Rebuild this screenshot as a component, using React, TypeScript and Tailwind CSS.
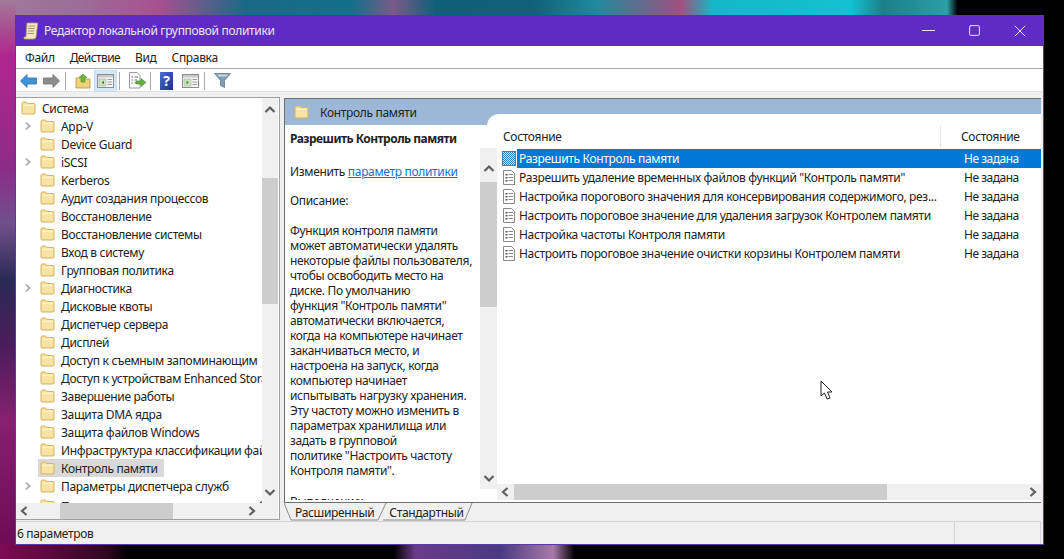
import React from "react";
import { X, Square, Minus } from "lucide-react";

const Folder = ({ className = "" }: { className?: string }) => (
  <svg width="15" height="14" viewBox="0 0 15 14" className={"shrink-0 " + className}>
    <path d="M1 2.5 Q1 1 2.5 1 H5.5 L7 2.5 H13 Q14 2.5 14 3.5 V12 Q14 13 13 13 H2 Q1 13 1 12 Z" fill="#f6dd8e" stroke="#d3b56a" strokeWidth="1" />
    <rect x="2" y="3.5" width="11" height="2" fill="#fdf3c8" />
    <rect x="2" y="5.5" width="11" height="6.5" fill="#f8e4a2" />
  </svg>
);

const Chev = ({ dir, className = "" }: { dir: "up" | "down" | "left" | "right"; className?: string }) => {
  const d = {
    up: "M1.5 7 L6 2.5 L10.5 7",
    down: "M1.5 3 L6 7.5 L10.5 3",
    left: "M7.5 1 L3 5 L7.5 9",
    right: "M3.5 1 L8 5 L3.5 9",
  }[dir];
  return (
    <svg width="12" height="10" viewBox="0 0 12 10" className={className}>
      <path d={d} fill="none" stroke="#5f5f5f" strokeWidth="2.2" />
    </svg>
  );
};

const PolicyIcon = ({ on }: { on?: boolean }) => (
  <svg width="14" height="15" viewBox="0 0 14 15" className="shrink-0">
    {on ? (
      <>
        <defs>
          <pattern id="dith" width="2" height="2" patternUnits="userSpaceOnUse">
            <rect width="2" height="2" fill="#2d7fc0" />
            <rect width="1" height="1" fill="#cfe3f3" />
            <rect x="1" y="1" width="1" height="1" fill="#cfe3f3" />
          </pattern>
        </defs>
        <rect x="0.5" y="0.5" width="13" height="14" fill="url(#dith)" stroke="#3b7fb5" />
      </>
    ) : (
      <>
        <path d="M1.5 0.5 H9.5 L12.5 3.5 V14.5 H1.5 Z" fill="#fff" stroke="#8a8a8a" />
        <rect x="3.5" y="4" width="2" height="1.5" fill="#555" />
        <rect x="6.5" y="4" width="4.5" height="1" fill="#8a8a8a" />
        <rect x="3.5" y="7" width="2" height="1.5" fill="#555" />
        <rect x="6.5" y="7" width="4.5" height="1" fill="#8a8a8a" />
        <rect x="3.5" y="10" width="2" height="1.5" fill="#555" />
        <rect x="6.5" y="10" width="4.5" height="1" fill="#8a8a8a" />
      </>
    )}
  </svg>
);

const Sep = () => <div className="w-px h-[18px] bg-[#a8a8a8] shrink-0" />;

const tree: { t: string; a?: boolean; sel?: boolean; last?: boolean }[] = [
  { t: "App-V", a: true },
  { t: "Device Guard" },
  { t: "iSCSI", a: true },
  { t: "Kerberos" },
  { t: "Аудит создания процессов" },
  { t: "Восстановление" },
  { t: "Восстановление системы" },
  { t: "Вход в систему" },
  { t: "Групповая политика" },
  { t: "Диагностика", a: true },
  { t: "Дисковые квоты" },
  { t: "Диспетчер сервера" },
  { t: "Дисплей" },
  { t: "Доступ к съемным запоминающим" },
  { t: "Доступ к устройствам Enhanced Storage" },
  { t: "Завершение работы" },
  { t: "Защита DMA ядра" },
  { t: "Защита файлов Windows" },
  { t: "Инфраструктура классификации файлов" },
  { t: "Контроль памяти", sel: true },
  { t: "Параметры диспетчера служб", a: true },
  { t: "Параметры пользовательских служб", last: true },
];

const rows = [
  "Разрешить Контроль памяти",
  "Разрешить удаление временных файлов функций \"Контроль памяти\"",
  "Настройка порогового значения для консервирования содержимого, рез...",
  "Настроить пороговое значение для удаления загрузок Контролем памяти",
  "Настройка частоты Контроля памяти",
  "Настроить пороговое значение очистки корзины Контролем памяти",
];

const desc = [
  "Функция контроля памяти",
  "может автоматически удалять",
  "некоторые файлы пользователя,",
  "чтобы освободить место на",
  "диске. По умолчанию",
  "функция \"Контроль памяти\"",
  "автоматически включается,",
  "когда на компьютере начинает",
  "заканчиваться место, и",
  "настроена на запуск, когда",
  "компьютер начинает",
  "испытывать нагрузку хранения.",
  "Эту частоту можно изменить в",
  "параметрах хранилища или",
  "задать в групповой",
  "политике \"Настроить частоту",
  "Контроля памяти\".",
];

export default function App() {
  return (
    <div className="relative w-[1064px] h-[559px] overflow-hidden bg-black pt-[15px] pl-[15px] font-['Noto_Sans',sans-serif] text-[12px] leading-[15px] tracking-[-0.33px] text-[#222]">
      <svg className="absolute inset-0" width="1064" height="559">
        <defs>
          <linearGradient id="top" x1="0" x2="1" y1="0" y2="0">
            <stop offset="0" stopColor="#a07a98" />
            <stop offset="0.07" stopColor="#9a6f96" />
            <stop offset="0.15" stopColor="#a8508f" />
            <stop offset="0.23" stopColor="#1a6a86" />
            <stop offset="0.33" stopColor="#12708a" />
            <stop offset="0.37" stopColor="#7a5a88" />
            <stop offset="0.41" stopColor="#0e5f78" />
            <stop offset="0.5" stopColor="#0f6078" />
            <stop offset="0.56" stopColor="#1f8a9c" />
            <stop offset="0.64" stopColor="#a0507e" />
            <stop offset="0.67" stopColor="#14b8c8" />
            <stop offset="0.8" stopColor="#12c2d0" />
            <stop offset="0.83" stopColor="#1a7f88" />
            <stop offset="0.89" stopColor="#2aa0a8" />
            <stop offset="0.9" stopColor="#000" />
            <stop offset="1" stopColor="#000" />
          </linearGradient>
          <linearGradient id="left" x1="0" x2="0" y1="0" y2="1">
            <stop offset="0" stopColor="#a07a98" />
            <stop offset="0.1" stopColor="#b0258f" />
            <stop offset="0.3" stopColor="#8c2c86" />
            <stop offset="0.4" stopColor="#70508c" />
            <stop offset="0.5" stopColor="#2a2a55" />
            <stop offset="0.62" stopColor="#4c1c5c" />
            <stop offset="0.75" stopColor="#862070" />
            <stop offset="1" stopColor="#6a0a50" />
          </linearGradient>
          <linearGradient id="bot" x1="0" x2="1" y1="0" y2="0">
            <stop offset="0" stopColor="#800a55" />
            <stop offset="0.1" stopColor="#300820" />
            <stop offset="0.12" stopColor="#000" />
            <stop offset="0.37" stopColor="#000" />
            <stop offset="0.39" stopColor="#6a3a88" />
            <stop offset="0.47" stopColor="#4a3a80" />
            <stop offset="0.52" stopColor="#a77aa8" />
            <stop offset="0.54" stopColor="#000" />
            <stop offset="1" stopColor="#000" />
          </linearGradient>
        </defs>
        <rect x="0" y="0" width="1064" height="16" fill="url(#top)" />
        <rect x="0" y="0" width="16" height="559" fill="url(#left)" />
        <rect x="0" y="544" width="1064" height="15" fill="url(#bot)" />
      </svg>

      <div className="relative w-[1029px] h-[530px] bg-[#f0f0f0] flex flex-col border-x border-b border-[#5a3aa8]">
        {/* title bar */}
        <div className="h-[31px] -mx-px bg-[#5f2bc4] flex items-center text-white shrink-0">
          <svg width="16" height="18" viewBox="0 0 16 18" className="ml-[8px]">
            <path d="M4 1 H14 Q15.5 1 14.5 3 L13 15 Q12.5 17 11 17 H2 Q0.5 17 1 15 H3 Z" fill="#f3e6bf" stroke="#b9a26a" strokeWidth="0.8" />
            <path d="M5.5 4 H12 M5 6.5 H11.5 M5 9 H11 M4.5 11.5 H11" stroke="#a08a58" strokeWidth="0.9" />
          </svg>
          <span className="ml-[5px] text-[#ece6f8]">Редактор локальной групповой политики</span>
          <div className="ml-auto mr-px flex text-[#e9e2f8]">
            <div className="w-[46px] h-[30px] flex items-center justify-center"><Minus size={21} strokeWidth={1} absoluteStrokeWidth /></div>
            <div className="w-[46px] h-[30px] flex items-center justify-center"><Square size={13} strokeWidth={1} absoluteStrokeWidth /></div>
            <div className="w-[46px] h-[30px] flex items-center justify-center"><X size={20} strokeWidth={1} absoluteStrokeWidth /></div>
          </div>
        </div>

        {/* menu */}
        <div className="h-[22px] bg-white flex items-center gap-[15px] pl-[9px] shrink-0 border-b border-[#a9a9a9] box-content">
          <span>Файл</span>
          <span className="tracking-[-0.6px]">Действие</span>
          <span>Вид</span>
          <span>Справка</span>
        </div>

        {/* toolbar */}
        <div className="h-[23px] bg-white flex items-center pl-[4px] pt-px shrink-0 border-b border-[#e2e2e2]">
          <svg width="17" height="14" viewBox="0 0 17 14">
            <path d="M0.5 7 L7 0.5 V4 H16.5 V10 H7 V13.5 Z" fill="#3f93dc" stroke="#2a6fb0" strokeWidth="0.8" />
          </svg>
          <svg width="17" height="14" viewBox="0 0 17 14" className="ml-[6px]">
            <path d="M16.5 7 L10 0.5 V4 H0.5 V10 H10 V13.5 Z" fill="#8d8d8d" stroke="#6e6e6e" strokeWidth="0.8" />
          </svg>
          <div className="ml-[5px]"><Sep /></div>
          <svg width="16" height="16" viewBox="0 0 16 16" className="ml-[9px]">
            <path d="M1 5 H6 L7 6 H15 V15 H1 Z" fill="#f0d078" stroke="#b59648" strokeWidth="0.8" />
            <path d="M8 1 L12 4.5 H10 V9 H6 V4.5 H4 Z" fill="#6fb53a" stroke="#4a8a26" strokeWidth="0.6" />
          </svg>
          <div className="ml-[3px] w-[23px] h-[22px] bg-[#d4e8f8] border border-[#c2ddf3] flex items-center justify-center">
            <svg width="17" height="14" viewBox="0 0 17 14">
              <rect x="0.5" y="0.5" width="16" height="13" fill="#f6f6f6" stroke="#8d8d8d" />
              <rect x="1" y="1" width="15" height="2.5" fill="#c9c9c9" />
              <rect x="2" y="5" width="7" height="7" fill="#cfe6c0" stroke="#9c9c9c" strokeWidth="0.5" />
              <path d="M7 6.5 L4.5 8.5 L7 10.5 Z" fill="#3f9a3f" />
              <path d="M10.5 5.5 H15 M10.5 8 H15 M10.5 10.5 H15" stroke="#9a9a9a" />
            </svg>
          </div>
          <div className="ml-[2px]"><Sep /></div>
          <svg width="19" height="17" viewBox="0 0 19 17" className="ml-[8px]">
            <path d="M1.5 0.5 H9 L12 3.5 V16 H1.5 Z" fill="#fff" stroke="#9a9a9a" />
            <path d="M3.5 5 H5 M6.5 5 H10 M3.5 8 H5 M6.5 8 H9 M3.5 11 H5 M6.5 11 H8" stroke="#707070" />
            <path d="M18 10.5 L13 6.5 V9 H8 V12 H13 V14.5 Z" fill="#62b33a" stroke="#44882a" strokeWidth="0.6" />
          </svg>
          <div className="ml-[3px]"><Sep /></div>
          <div className="ml-[9px] w-[13px] h-[18px] bg-gradient-to-br from-[#4d6fd0] to-[#1d2f8a] text-white font-bold text-[14px] leading-[18px] text-center">?</div>
          <svg width="17" height="14" viewBox="0 0 17 14" className="ml-[9px]">
            <rect x="0.5" y="0.5" width="16" height="13" fill="#f6f6f6" stroke="#8d8d8d" />
            <rect x="1" y="1" width="15" height="2.5" fill="#c9c9c9" />
            <rect x="2" y="5" width="7" height="7" fill="#cfe6c0" stroke="#9c9c9c" strokeWidth="0.5" />
            <path d="M4.5 6.5 L7 8.5 L4.5 10.5 Z" fill="#3f9a3f" />
            <path d="M10.5 5.5 H15 M10.5 8 H15 M10.5 10.5 H15" stroke="#9a9a9a" />
          </svg>
          <div className="ml-[5px]"><Sep /></div>
          <svg width="17" height="17" viewBox="0 0 17 17" className="ml-[9px]">
            <path d="M0.5 1.5 H16.5 L10.5 8.5 V15.5 L6.5 13.5 V8.5 Z" fill="#7f9fb4" stroke="#5f7a8c" strokeWidth="0.8" />
            <path d="M3 2.5 H14 L12 4.5 H5 Z" fill="#c9d8e2" />
          </svg>
        </div>

        {/* content */}
        <div className="flex-1 min-h-0 flex pt-[5px] pr-[2px] gap-[4px]">
          {/* tree */}
          <div className="w-[264px] mb-px flex flex-col border-y border-r border-[#a0a0a0] bg-white">
            <div className="flex-1 min-h-0 flex">
              <div className="flex-1 min-w-0 overflow-hidden pt-px whitespace-nowrap">
                <div className="h-[18px] flex items-center pl-[5px] gap-[6px]">
                  <Folder />
                  <span>Система</span>
                </div>
                {tree.map((n) => (
                  <div key={n.t} className={"h-[18px] flex items-center pl-[6px] " + (n.last ? "mt-[2px]" : "")}>
                    <div className="w-[16px] pr-[5px] flex justify-center shrink-0">
                      {n.a && <Chev dir="right" className="opacity-50 w-[10px] shrink-0" />}
                    </div>
                    <div className={"flex items-center h-[18px] gap-[6px] pl-[2px] pr-[6px] " + (n.sel ? "bg-[#d9d9d9]" : "")}>
                      <Folder />
                      <span>{n.t}</span>
                    </div>
                  </div>
                ))}
              </div>
              <div className="w-[16px] bg-[#f0f0f0] flex flex-col items-center shrink-0 mr-px">
                <div className="h-[20px] pt-[3px] flex items-center"><Chev dir="up" /></div>
                <div className="h-[60px]" />
                <div className="h-[126px] w-full bg-[#cdcdcd]" />
                <div className="flex-1" />
                <div className="h-[20px] pb-[3px] flex items-center"><Chev dir="down" /></div>
              </div>
            </div>
            <div className="h-[16px] bg-[#f0f0f0] flex items-center shrink-0 mr-px">
              <div className="w-[17px] flex justify-center"><Chev dir="left" /></div>
              <div className="w-[27px]" />
              <div className="w-[113px] h-full bg-[#cdcdcd]" />
              <div className="flex-1" />
              <div className="w-[17px] flex justify-center"><Chev dir="right" /></div>
              <div className="w-[18px]" />
            </div>
          </div>

          {/* right pane */}
          <div className="relative flex-1 min-w-0 flex flex-col">
            <div className="relative flex-1 min-h-0 mt-px flex flex-col border-t border-l border-[#6e6e6e] border-b">
              <div className="h-[26px] bg-[#9db8d6] flex items-center pl-[9px] gap-[8px] shrink-0">
                <Folder />
                <span className="ml-[3px]">Контроль памяти</span>
              </div>
              <div className="absolute left-[202px] right-0 top-[15px] h-[12px] bg-white rounded-tl-[14px]" />
              <div className="flex-1 min-h-0 flex bg-white">
                {/* description */}
                <div className="w-[195px] shrink-0 overflow-hidden pl-[5px] pt-[6px] mb-[2px]">
                  <div className="font-bold whitespace-nowrap tracking-[-0.52px]">Разрешить Контроль памяти</div>
                  <div className="mt-[18px] whitespace-nowrap">
                    Изменить <span className="text-[#1a6fc0] underline">параметр политики</span>
                  </div>
                  <div className="mt-[14px]">Описание:</div>
                  <div className="mt-[15px] whitespace-nowrap">
                    {desc.map((l) => (
                      <div key={l}>{l}</div>
                    ))}
                  </div>
                  <div className="mt-[16px]">Выполнение:</div>
                </div>
                {/* description scrollbar */}
                <div className="w-[17px] shrink-0 flex flex-col pt-[23px]">
                  <div className="flex-1 bg-[#f0f0f0] flex flex-col items-center mb-[13px]">
                    <div className="h-[34px] flex items-center pt-[8px]"><Chev dir="up" /></div>
                    <div className="h-[125px] w-full bg-[#cdcdcd]" />
                    <div className="flex-1" />
                    <div className="h-[22px] flex items-center"><Chev dir="down" /></div>
                  </div>
                </div>
                {/* list */}
                <div className="flex-1 min-w-0 flex flex-col">
                  <div className="h-[24px] pb-[2px] flex items-center shrink-0">
                    <span className="ml-[6px] flex-1">Состояние</span>
                    <div className="w-px h-[22px] bg-[#e5e5e5]" />
                    <span className="w-[100px] pl-[20px]">Состояние</span>
                  </div>
                  <div className="flex-1 min-h-0">
                    {rows.map((r, i) => (
                      <div key={r} className="h-[19px] flex items-center whitespace-nowrap">
                        <div className="w-[20px] flex justify-end pr-[1px] shrink-0"><PolicyIcon on={i === 0} /></div>
                        <div className={"flex-1 flex items-center h-[19px] " + (i === 0 ? "bg-[#0078d7] text-white" : "")}>
                          <span className="ml-[2px] w-[443px]">{r}</span>
                          <span className="ml-[2px] tracking-[-0.5px]">Не задана</span>
                        </div>
                      </div>
                    ))}
                  </div>
                  <div className="h-[16px] bg-[#f0f0f0] flex items-center shrink-0 mb-[2px]">
                    <div className="w-[17px] flex justify-center"><Chev dir="left" /></div>
                    <div className="w-[373px] h-full bg-[#cdcdcd]" />
                    <div className="flex-1" />
                    <div className="w-[17px] flex justify-center"><Chev dir="right" /></div>
                  </div>
                </div>
              </div>
            </div>
            {/* tabs */}
            <div className="relative h-[18px] shrink-0 flex items-center pl-[11px]">
              <svg className="absolute left-0 top-0" width="200" height="18" viewBox="0 0 200 18">
                <path d="M0 0 L7 17 H94 L102 0 M99 17 H181 L188 0" fill="none" stroke="#8a8a8a" />
              </svg>
              <span className="relative">Расширенный</span>
              <span className="relative ml-[15px]">Стандартный</span>
            </div>
          </div>
        </div>

        {/* status */}
        <div className="h-[23px] shrink-0 mr-[2px] border-t border-r border-[#d4d4d4] flex items-center pl-px">
          <span className="flex-1">6 параметров</span>
          <div className="w-px h-full bg-[#d4d4d4]" />
          <div className="w-[85px]" />
        </div>
      </div>

      {/* mouse pointer */}
      <svg className="absolute left-[820px] top-[380px]" width="14" height="21" viewBox="0 0 14 21">
        <path d="M1 1 V16 L4.5 13 L7 19 L10 18 L7.5 12 H12 Z" fill="#fff" stroke="#222" strokeWidth="1" />
      </svg>
    </div>
  );
}
